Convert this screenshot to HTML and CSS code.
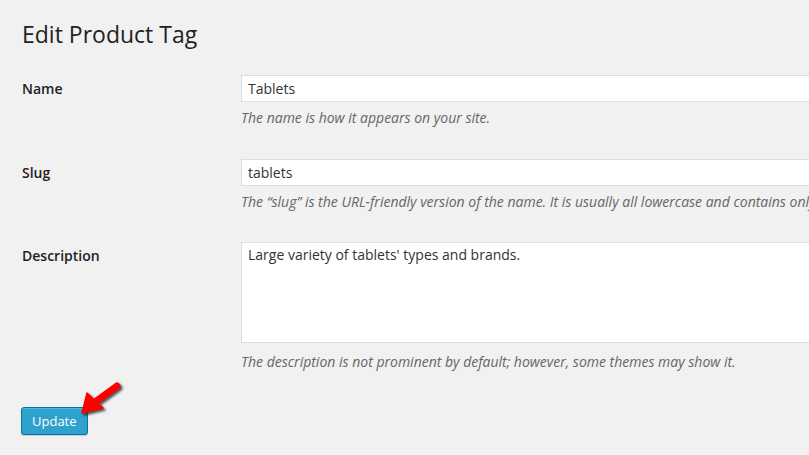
FILE: index.html
```html
<!DOCTYPE html>
<html>
<head>
<meta charset="utf-8">
<link rel="stylesheet" href="styles.css">
</head>
<body>
<div class="wrap">
  <h1 class="title">Edit Product Tag</h1>
  <div class="form">
    <div class="row">
      <div class="label">Name</div>
      <div class="field">
        <div class="input">Tablets</div>
        <p class="desc">The name is how it appears on your site.</p>
      </div>
    </div>
    <div class="row">
      <div class="label">Slug</div>
      <div class="field">
        <div class="input">tablets</div>
        <p class="desc">The “slug” is the URL-friendly version of the name. It is usually all lowercase and contains only letters, numbers, and hyphens.</p>
      </div>
    </div>
    <div class="row row-ta">
      <div class="label">Description</div>
      <div class="field">
        <div class="textarea">Large variety of tablets' types and brands.</div>
        <p class="desc desc-ta">The description is not prominent by default; however, some themes may show it.</p>
      </div>
    </div>
  </div>
  <div class="actions">
    <button class="btn">Update</button>
  </div>
</div>
<svg class="arrow" width="60" height="50" viewBox="75 378 60 50">
  <defs>
    <filter id="blur" x="-50%" y="-50%" width="200%" height="200%">
      <feGaussianBlur stdDeviation="1.2"/>
    </filter>
  </defs>
  <g transform="translate(2,2)" fill="#222" stroke="#222" opacity="0.75" filter="url(#blur)">
    <line x1="95" y1="402" x2="117" y2="386" stroke-width="7" stroke-linecap="round"/>
    <polygon points="82,413 87,393 103,408" stroke-width="1.5" stroke-linejoin="round"/>
  </g>
  <g fill="#f00" stroke="#f00">
    <line x1="95" y1="402" x2="117" y2="386" stroke-width="7" stroke-linecap="round"/>
    <polygon points="82,413 87,393 103,408" stroke-width="1.5" stroke-linejoin="round"/>
  </g>
</svg>
</body>
</html>
```
FILE: styles.css
```css
html, body {
  margin: 0;
  padding: 0;
  overflow: hidden;
  background: #f1f1f1;
}
body {
  width: 809px;
  height: 455px;
  font-family: "Open Sans", "Noto Sans", sans-serif;
  color: #444;
  position: relative;
}
.wrap {
  padding: 0 0 0 21px;
}
.title {
  margin: 0;
  padding: 15px 0 0 1px;
  font-size: 23px;
  font-weight: 400;
  line-height: 38px;
  color: #222;
  height: 45px;
}
.form {
  display: flex;
  flex-direction: column;
}
.row {
  display: flex;
  padding: 15px 0 16px 0;
}
.row-ta {
  padding-top: 14px;
}
.label {
  width: 219px;
  flex: none;
  padding: 5px 0 0 1px;
  font-size: 14px;
  font-weight: 600;
  line-height: 18px;
  color: #222;
}
.field {
  flex: none;
  width: 700px;
}
.input {
  box-sizing: border-box;
  height: 27px;
  width: 700px;
  background: #fff;
  border: 1px solid #ddd;
  padding: 0 6px;
  font-size: 14px;
  line-height: 25px;
  color: #333;
  white-space: nowrap;
}
.textarea {
  box-sizing: border-box;
  height: 101px;
  width: 700px;
  background: #fff;
  border: 1px solid #ddd;
  padding: 2px 6px;
  font-size: 14px;
  line-height: 20px;
  color: #333;
}
.desc {
  margin: 5px 0 0 0;
  font-size: 14px;
  font-style: italic;
  line-height: 21px;
  color: #666;
  white-space: nowrap;
}
.desc-ta {
  margin-top: 8px;
}
.actions {
  padding-top: 19px;
}
.btn {
  box-sizing: border-box;
  height: 28px;
  padding: 0 10px;
  background: #2ea2cc;
  border: 1px solid #0074a2;
  border-radius: 3px;
  box-shadow: inset 0 1px 0 rgba(120,200,230,0.5), 0 1px 0 rgba(0,0,0,0.15);
  color: #fff;
  font-family: "Open Sans", "Noto Sans", sans-serif;
  font-size: 13px;
  line-height: 26px;
}
.arrow {
  position: absolute;
  left: 75px;
  top: 378px;
}
```
